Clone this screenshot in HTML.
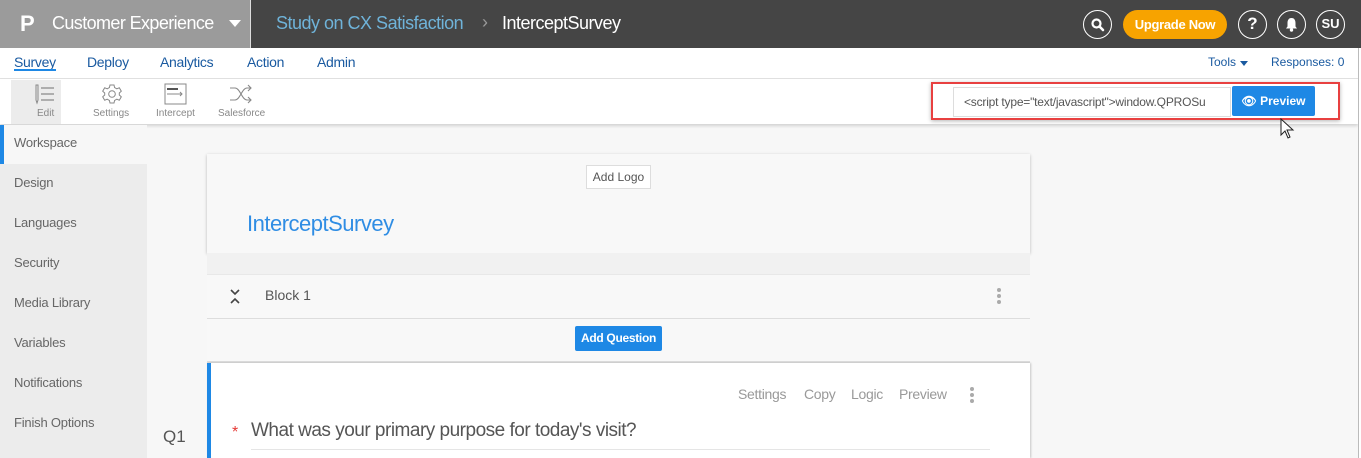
<!DOCTYPE html>
<html><head><meta charset="utf-8"><style>
*{margin:0;padding:0;box-sizing:border-box}
body{width:1361px;height:458px;overflow:hidden;background:#f7f7f7;font-family:"Liberation Sans",sans-serif;position:relative}
.a{position:absolute;white-space:nowrap}
</style></head><body>
<!-- top bar -->
<div class="a" style="left:0;top:0;width:250px;height:48px;background:#9b9b9b"></div>
<div class="a" style="left:250px;top:0;width:1111px;height:48px;background:#454545;border-left:1px solid #ddd"></div>
<div class="a" style="left:20px;top:11px;color:#fff;font:bold 22px 'Liberation Sans',sans-serif">P</div>
<div class="a" style="left:52px;top:13px;color:#fff;font-size:18px;letter-spacing:-0.6px">Customer Experience</div>
<div class="a" style="left:229px;top:20px;width:0;height:0;border-left:6px solid transparent;border-right:6px solid transparent;border-top:7px solid #fff"></div>
<div class="a" style="left:276px;top:13px;color:#6fb3d9;font-size:18px;letter-spacing:-0.5px">Study on CX Satisfaction</div>
<div class="a" style="left:482px;top:12px;color:#999;font-size:18px">›</div>
<div class="a" style="left:502px;top:13px;color:#fff;font-size:18px;letter-spacing:-0.5px">InterceptSurvey</div>
<div class="a" style="left:1083px;top:10px;width:29px;height:29px;border:1.5px solid #fff;border-radius:50%"></div>
<svg class="a" style="left:1088px;top:15px" width="20" height="20" viewBox="0 0 20 20"><circle cx="8.5" cy="8.5" r="4" stroke="#fff" stroke-width="2.2" fill="none"/><path d="M11.5 11.5 15 15" stroke="#fff" stroke-width="2.6" stroke-linecap="round"/></svg>
<div class="a" style="left:1123px;top:10px;width:104px;height:29px;background:#f7a300;border-radius:15px;color:#fff;font-weight:bold;font-size:13px;line-height:29px;text-align:center;letter-spacing:-0.3px">Upgrade Now</div>
<div class="a" style="left:1238px;top:10px;width:29px;height:29px;border:1.5px solid #fff;border-radius:50%;color:#fff;font:bold 17px/26px 'Liberation Sans',sans-serif;text-align:center">?</div>
<div class="a" style="left:1277px;top:10px;width:29px;height:29px;border:1.5px solid #fff;border-radius:50%"></div>
<svg class="a" style="left:1283px;top:16px" width="17" height="17" viewBox="0 0 17 17"><path d="M8.5 2C5.5 2 4.5 4.5 4.5 7v3.5L3 12.5h11L12.5 10.5V7C12.5 4.5 11.5 2 8.5 2z" fill="#fff"/><circle cx="8.5" cy="14" r="1.7" fill="#fff"/></svg>
<div class="a" style="left:1316px;top:10px;width:29px;height:29px;border:1.5px solid #fff;border-radius:50%;color:#fff;font:bold 13px/26px 'Liberation Sans',sans-serif;text-align:center">SU</div>
<!-- nav -->
<div class="a" style="left:0;top:48px;width:1358px;height:31px;background:#fff;border-bottom:1px solid #e2e2e2"></div>
<div class="a" style="left:14px;top:54px;color:#1a5aa0;font-size:14px;letter-spacing:-0.3px">Survey</div>
<div class="a" style="left:14px;top:69px;width:42px;height:2px;background:#1e88e5"></div>
<div class="a" style="left:87px;top:54px;color:#1a5aa0;font-size:14px;letter-spacing:-0.3px">Deploy</div>
<div class="a" style="left:160px;top:54px;color:#1a5aa0;font-size:14px;letter-spacing:-0.3px">Analytics</div>
<div class="a" style="left:247px;top:54px;color:#1a5aa0;font-size:14px;letter-spacing:-0.3px">Action</div>
<div class="a" style="left:317px;top:54px;color:#1a5aa0;font-size:14px;letter-spacing:-0.3px">Admin</div>
<div class="a" style="left:1208px;top:55px;color:#1a5aa0;font-size:12px">Tools</div>
<div class="a" style="left:1240px;top:61px;border-left:4px solid transparent;border-right:4px solid transparent;border-top:5px solid #1a5aa0"></div>
<div class="a" style="left:1271px;top:55px;color:#1a5aa0;font-size:12px">Responses: 0</div>
<!-- toolbar -->
<div class="a" style="left:0;top:79px;width:1358px;height:45px;background:#fff;box-shadow:0 2px 3px rgba(0,0,0,.15)"></div>
<div class="a" style="left:11px;top:80px;width:50px;height:44px;background:#ececec"></div>
<svg class="a" style="left:30px;top:84px" width="28" height="22" viewBox="0 0 28 22"><path d="M6 1v15l1 3 1-3V1z" fill="none" stroke="#888" stroke-width="1"/><path d="M11 4h13M11 10h13M11 16h13" stroke="#888" stroke-width="1.3"/></svg>
<div class="a" style="left:37px;top:108px;color:#888;font-size:10px">Edit</div>
<svg class="a" style="left:101px;top:83px" width="22" height="22" viewBox="0 0 22 22"><path d="M9 2h4l.6 2.6 2.2 1.2 2.5-1 2 3.4-2 1.8v2l2 1.8-2 3.4-2.5-1-2.2 1.2L13 20H9l-.6-2.6-2.2-1.2-2.5 1-2-3.4 2-1.8v-2l-2-1.8 2-3.4 2.5 1 2.2-1.2z" fill="none" stroke="#888" stroke-width="1"/><circle cx="11" cy="11" r="3.3" fill="none" stroke="#888"/></svg>
<div class="a" style="left:93px;top:108px;color:#888;font-size:10px">Settings</div>
<svg class="a" style="left:164px;top:83px" width="24" height="22" viewBox="0 0 24 22"><rect x="1" y="1" width="21" height="20" fill="none" stroke="#888"/><path d="M3 6h11" stroke="#555" stroke-width="2"/><path d="M3 11h9M12 11h6M16 9l2 2-2 2" stroke="#888" fill="none"/></svg>
<div class="a" style="left:156px;top:108px;color:#888;font-size:10px">Intercept</div>
<svg class="a" style="left:228px;top:84px" width="26" height="20" viewBox="0 0 26 20"><path d="M2 4h5c5 0 7 12 12 12h4M2 16h5c5 0 7-12 12-12h4M20 1l3 3-3 3M20 13l3 3-3 3" fill="none" stroke="#888" stroke-width="1.1"/></svg>
<div class="a" style="left:218px;top:108px;color:#888;font-size:10px">Salesforce</div>
<!-- script box -->
<div class="a" style="left:931px;top:82px;width:409px;height:38px;border:2px solid #e84040;box-shadow:0 1px 4px rgba(0,0,0,.3)"></div>
<div class="a" style="left:953px;top:87px;width:278px;height:30px;background:#fff;border:1px solid #ddd;color:#555;font-size:12px;line-height:28px;padding-left:10px;overflow:hidden;letter-spacing:-0.2px">&lt;script type="text/javascript"&gt;window.QPROSu</div>
<div class="a" style="left:1232px;top:86px;width:83px;height:30px;background:#1e88e5;border-radius:2px;color:#fff;font-weight:bold;font-size:12px;line-height:30px;text-align:center">&#128065;&#xFE0E; Preview</div>
<svg class="a" style="left:1280px;top:118px" width="16" height="22" viewBox="0 0 16 22"><path d="M1 1v16l4-4 3 7 2-1-3-7h6z" fill="#fff" stroke="#222" stroke-width="1"/></svg>
<!-- sidebar -->
<div class="a" style="left:0;top:125px;width:147px;height:333px;background:#ececec"></div>
<div class="a" style="left:0;top:125px;width:147px;height:39px;background:#f7f7f7;border-left:4px solid #1e88e5"></div>
<div class="a" style="left:14px;top:123px;color:#666;font-size:13px;line-height:40px;letter-spacing:-0.2px">Workspace<br>Design<br>Languages<br>Security<br>Media Library<br>Variables<br>Notifications<br>Finish Options</div>
<div class="a" style="left:1358px;top:48px;width:3px;height:410px;background:#fff;border-left:1px solid #bbb"></div>
<!-- card 1 -->
<div class="a" style="left:207px;top:154px;width:823px;height:99px;background:#f8f8f8;box-shadow:0 1px 3px rgba(0,0,0,.25)"></div>
<div class="a" style="left:586px;top:165px;width:65px;height:24px;background:#fff;border:1px solid #ddd;color:#555;font-size:12px;line-height:22px;text-align:center">Add Logo</div>
<div class="a" style="left:247px;top:211px;color:#2f8de4;font-size:22px;letter-spacing:-0.5px">InterceptSurvey</div>
<div class="a" style="left:207px;top:253px;width:823px;height:21px;background:#f1f1f1"></div>
<!-- block -->
<div class="a" style="left:207px;top:274px;width:823px;height:89px;background:#f8f8f8;border-top:1px solid #e8e8e8"></div>
<div class="a" style="left:207px;top:318px;width:823px;height:1px;background:#ddd"></div>
<div class="a" style="left:207px;top:361px;width:823px;height:2px;background:#ddd"></div>
<svg class="a" style="left:229px;top:289px" width="12" height="16" viewBox="0 0 12 16"><path d="M2 1l4 4 4-4M2 14l4-4 4 4" fill="none" stroke="#444" stroke-width="1.6"/></svg>
<div class="a" style="left:265px;top:287px;color:#555;font-size:14px">Block 1</div>
<div class="a" style="left:997px;top:288px;width:4px;height:4px;background:#aaa;border-radius:50%;box-shadow:0 6px #aaa,0 12px #aaa"></div>
<div class="a" style="left:575px;top:326px;width:87px;height:25px;background:#1e88e5;border-radius:2px;color:#fff;font-weight:bold;font-size:12px;line-height:25px;text-align:center;letter-spacing:-0.3px">Add Question</div>
<!-- question -->
<div class="a" style="left:207px;top:363px;width:823px;height:95px;background:#fff;border-left:4px solid #1e88e5;box-shadow:1px 0 2px rgba(0,0,0,.2)"></div>
<div class="a" style="left:738px;top:386px;color:#999;font-size:14px;letter-spacing:-0.3px">Settings</div>
<div class="a" style="left:804px;top:386px;color:#999;font-size:14px;letter-spacing:-0.3px">Copy</div>
<div class="a" style="left:851px;top:386px;color:#999;font-size:14px;letter-spacing:-0.3px">Logic</div>
<div class="a" style="left:899px;top:386px;color:#999;font-size:14px;letter-spacing:-0.3px">Preview</div>
<div class="a" style="left:970px;top:387px;width:4px;height:4px;background:#aaa;border-radius:50%;box-shadow:0 6px #aaa,0 12px #aaa"></div>
<div class="a" style="left:163px;top:427px;color:#555;font-size:17px">Q1</div>
<div class="a" style="left:232px;top:424px;color:#e53935;font-size:16px">*</div>
<div class="a" style="left:251px;top:420px;color:#555;font-size:19px;letter-spacing:-0.5px">What was your primary purpose for today's visit?</div>
<div class="a" style="left:251px;top:449px;width:739px;height:1px;background:#e5e5e5"></div>
</body></html>
